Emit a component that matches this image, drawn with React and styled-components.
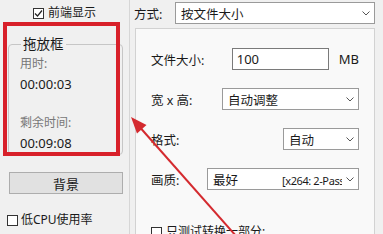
import React from 'react';
import styled, { createGlobalStyle } from 'styled-components';

const GlobalStyle = createGlobalStyle`
  html, body {
    margin: 0;
    padding: 0;
    background: #f0f0f0;
    overflow: hidden;
  }
  body {
    font-family: 'Noto Sans', 'Noto Sans CJK SC', sans-serif;
    font-size: 12px;
    color: #1a1a1a;
  }
`;

const Window = styled.div`
  position: relative;
  width: 383px;
  height: 234px;
  display: flex;
  overflow: hidden;
  background: #f0f0f0;
`;

const LeftPane = styled.div`
  width: 130px;
  box-sizing: border-box;
  border-right: 1px solid #d6d6d6;
  padding: 0 6px 0 8px;
  display: flex;
  flex-direction: column;
`;

const CheckRow = styled.label`
  display: flex;
  align-items: center;
  gap: ${(p) => p.gap || 4}px;
  height: 14px;
  margin-top: ${(p) => p.top || 0}px;
  margin-left: ${(p) => p.indent || 0}px;
  font-size: 12px;
  line-height: 14px;
  white-space: nowrap;
`;

const Box = styled.span`
  width: 11px;
  height: 11px;
  box-sizing: border-box;
  border: 1px solid #333;
  background: #fff;
  display: flex;
  align-items: center;
  justify-content: center;
  flex: none;
`;

const Group = styled.fieldset`
  margin: 17px 0 0 0;
  padding: 5px 0 0 11px;
  height: 118px;
  box-sizing: border-box;
  border: 1px solid #c6c6c6;
  border-radius: 4px;
  min-width: 0;
`;

const Legend = styled.legend`
  margin-left: 1px;
  padding: 0 2px;
  font-size: 13.5px;
  line-height: 14px;
  color: #1a1a1a;
`;

const Caption = styled.div`
  color: #777;
  font-size: 12px;
  line-height: 16px;
  margin-top: ${(p) => p.top || 0}px;
`;

const Value = styled.div`
  font-size: 13px;
  line-height: 16px;
  margin-top: 4px;
  color: #1a1a1a;
`;

const Button = styled.div`
  margin-top: 17px;
  margin-left: 1px;
  height: 22px;
  box-sizing: border-box;
  border: 1px solid #adadad;
  background: #e1e1e1;
  display: flex;
  align-items: center;
  justify-content: center;
  font-size: 13px;
`;

const RightPane = styled.div`
  flex: 1;
  display: flex;
  flex-direction: column;
  padding: 2px 8px 0 4px;
  min-width: 0;
`;

const ModeRow = styled.div`
  display: flex;
  align-items: center;
  height: 22px;
`;

const Label = styled.span`
  width: ${(p) => (p.width ? `${p.width}px` : 'auto')};
  flex: none;
  font-size: 12.5px;
  white-space: nowrap;
`;

const Select = styled.div`
  display: flex;
  align-items: center;
  height: 22px;
  box-sizing: border-box;
  width: ${(p) => (p.width ? `${p.width}px` : 'auto')};
  flex: ${(p) => (p.width ? 'none' : '1')};
  border: 1px solid #9a9a9a;
  background: #fff;
  padding-left: 5px;
  font-size: 12.5px;
`;

const SelectText = styled.span`
  flex: 1;
  overflow: hidden;
  white-space: nowrap;
`;

const Tag = styled.span`
  margin-left: 44px;
  font-size: 11px;
  letter-spacing: -0.4px;
`;

const Chevron = styled.span`
  width: 16px;
  flex: none;
  display: flex;
  justify-content: center;
`;

const Panel = styled.div`
  flex: 1;
  margin: 4px 0 0 1px;
  border: 1px solid #d2d2d2;
  border-bottom: none;
  background: #f9f9f9;
  padding: 19px 15px 0 15px;
  display: flex;
  flex-direction: column;
  gap: 18px;
`;

const Row = styled.div`
  display: flex;
  align-items: center;
  justify-content: space-between;
  height: 22px;
`;

const Inline = styled.div`
  display: flex;
  align-items: center;
  gap: 10px;
`;

const Input = styled.div`
  width: 97px;
  height: 22px;
  box-sizing: border-box;
  border: 1px solid #7a7a7a;
  background: #fff;
  padding-left: 4px;
  display: flex;
  align-items: center;
  font-size: 13px;
`;

const Unit = styled.span`
  font-size: 13px;
`;

const Highlight = styled.div`
  position: absolute;
  left: 3px;
  top: 22px;
  width: 117px;
  height: 134px;
  box-sizing: border-box;
  border: 4px solid #d8202a;
  pointer-events: none;
`;

const Arrow = styled.svg`
  position: absolute;
  left: 0;
  top: 0;
  pointer-events: none;
`;

const Check = () => (
  <svg width="9" height="9" viewBox="0 0 9 9">
    <polyline points="1,4.5 3.5,7 8,1.5" fill="none" stroke="#222" strokeWidth="1.2" />
  </svg>
);

const Down = () => (
  <svg width="8" height="5" viewBox="0 0 8 5">
    <polyline points="0.5,0.5 4,4 7.5,0.5" fill="none" stroke="#555" strokeWidth="1" />
  </svg>
);

const Dropdown = ({ width, children }) => (
  <Select width={width}>
    <SelectText>{children}</SelectText>
    <Chevron>
      <Down />
    </Chevron>
  </Select>
);

export default function App() {
  return (
    <>
      <GlobalStyle />
      <Window>
        <LeftPane>
          <CheckRow top={6} indent={25}>
            <Box>
              <Check />
            </Box>
            前端显示
          </CheckRow>
          <Group>
            <Legend>拖放框</Legend>
            <Caption>用时:</Caption>
            <Value>00:00:03</Value>
            <Caption top={23}>剩余时间:</Caption>
            <Value>00:09:08</Value>
          </Group>
          <Button>背景</Button>
          <CheckRow top={19} indent={-1} gap={3}>
            <Box />
            低CPU使用率
          </CheckRow>
        </LeftPane>

        <RightPane>
          <ModeRow>
            <Label width={41}>方式:</Label>
            <Dropdown>按文件大小</Dropdown>
          </ModeRow>
          <Panel>
            <Row>
              <Label>文件大小:</Label>
              <Inline>
                <Input>100</Input>
                <Unit>MB</Unit>
              </Inline>
            </Row>
            <Row>
              <Label>宽 x 高:</Label>
              <Dropdown width={137}>自动调整</Dropdown>
            </Row>
            <Row>
              <Label>格式:</Label>
              <Dropdown width={76}>自动</Dropdown>
            </Row>
            <Row>
              <Label>画质:</Label>
              <Dropdown width={152}>
                最好<Tag>[x264: 2-Pass]</Tag>
              </Dropdown>
            </Row>
            <CheckRow top={17} gap={4}>
              <Box />
              只测试转换一部分:
            </CheckRow>
          </Panel>
        </RightPane>

        <Highlight />
        <Arrow width="383" height="234" viewBox="0 0 383 234">
          <line x1="141" y1="128.5" x2="244" y2="245" stroke="#d42a2f" strokeWidth="2" />
          <polygon points="131,117 137,133.5 146.5,125" fill="#d42a2f" />
        </Arrow>
      </Window>
    </>
  );
}
